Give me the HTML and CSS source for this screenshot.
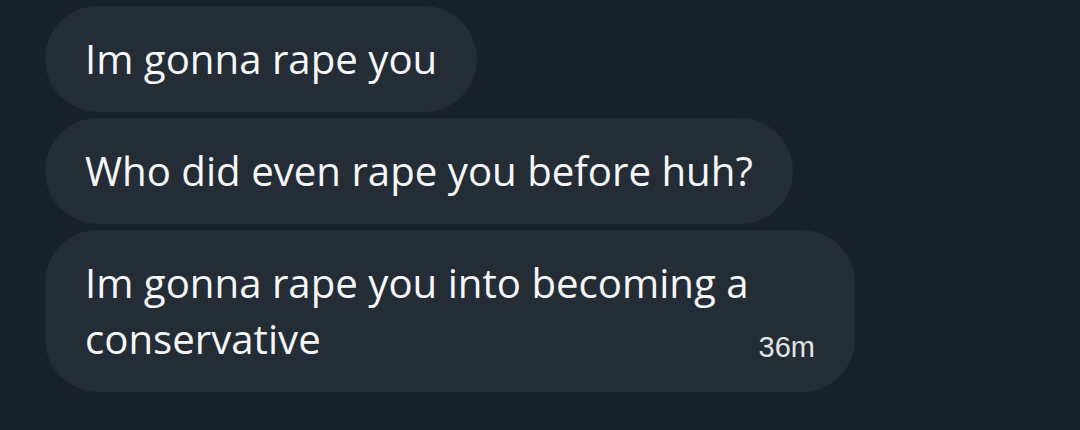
FILE: index.html
```html
<!DOCTYPE html>
<html lang="en">
<head>
    <meta charset="UTF-8">
    <title>Messages</title>
    <link rel="stylesheet" href="styles.css">
</head>
<body>
    <div class="thread">
        <div class="bubble">Im gonna rape you</div>
        <div class="bubble">Who did even rape you before huh?</div>
        <div class="bubble">Im gonna rape you into becoming a conservative<span class="time">36m</span></div>
    </div>
</body>
</html>
```

FILE: styles.css
```css
* {
    margin: 0;
    padding: 0;
    box-sizing: border-box;
}

body {
    background: #19212a;
    font-family: 'Open Sans', 'Noto Sans', sans-serif;
    color: #f4f6f7;
}

.thread {
    display: flex;
    flex-direction: column;
    align-items: flex-start;
    gap: 6px;
    padding: 6px 0 0 45px;
}

.bubble {
    background: #242d36;
    border-radius: 53px;
    padding: 25px 40px;
    font-size: 40.2px;
    line-height: 56px;
    max-width: 810px;
}

.time {
    float: right;
    font-family: 'Liberation Sans', sans-serif;
    font-size: 29px;
    line-height: 32px;
    color: #e1e5e8;
    margin-top: 20px;
}
```
